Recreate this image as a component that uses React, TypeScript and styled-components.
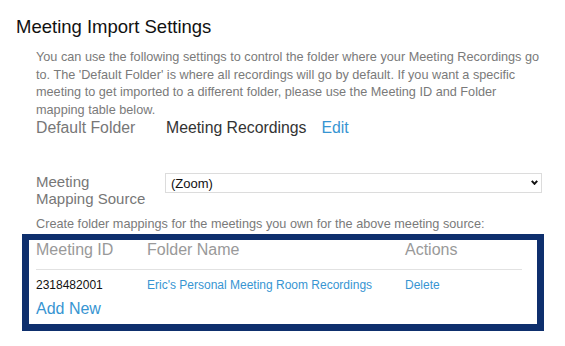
import React from "react";
import styled, { createGlobalStyle } from "styled-components";

const Global = createGlobalStyle`
  html, body { margin: 0; padding: 0; background: #fff; }
  body { font-family: "Liberation Sans", Arial, Helvetica, sans-serif; }
  * { box-sizing: border-box; }
`;

const Page = styled.div`
  width: 565px;
  height: 346px;
  padding: 16px 0 0 16px;
  overflow: hidden;
`;

const Title = styled.h2`
  margin: 0;
  font-size: 18.5px;
  font-weight: 400;
  color: #111;
  line-height: 22px;
`;

const Content = styled.div`
  padding: 0 0 0 20px;
  width: 529px;
`;

const Intro = styled.p`
  margin: 11px 0 0;
  font-size: 12.7px;
  line-height: 17.5px;
  color: #7a7a7a;
  width: 509px;
`;

const DefaultRow = styled.div`
  display: flex;
  align-items: baseline;
  font-size: 15.8px;
  line-height: 18px;
`;

const FieldLabel = styled.div`
  width: 130px;
  flex: none;
  color: #777;
`;

const Value = styled.span`
  color: #333;
  margin-right: 15px;
`;

const Link = styled.a<{ $size?: number }>`
  color: #3795d2;
  text-decoration: none;
  font-size: ${(p) => p.$size ?? 15.8}px;
  cursor: pointer;
`;

const MappingRow = styled.div`
  display: flex;
  align-items: flex-start;
  margin-top: 36px;
`;

const MappingLabel = styled.div`
  width: 129px;
  flex: none;
  color: #777;
  font-size: 15px;
  line-height: 17px;
`;

const SelectWrap = styled.div`
  position: relative;
  width: 377px;
  height: 20px;
`;

const Select = styled.select`
  appearance: none;
  -webkit-appearance: none;
  width: 100%;
  height: 100%;
  border: 1px solid #dcdcdc;
  border-radius: 0;
  background: #fff;
  font-family: "Liberation Sans", Arial, sans-serif;
  font-size: 13px;
  color: #111;
  padding: 0 0 0 5px;
  outline: none;
`;

const Chevron = styled.svg`
  position: absolute;
  right: 4px;
  top: 7px;
  pointer-events: none;
`;

const Hint = styled.div`
  margin-top: 8px;
  font-size: 12.7px;
  line-height: 18px;
  color: #7a7a7a;
`;

const Box = styled.div`
  margin: 1px 0 0 -14px;
  width: 522px;
  border: 7px solid #0e2f6d;
  border-top-width: 6px;
  padding: 0 15px 5px 7px;
`;

const Grid = styled.div`
  display: grid;
  grid-template-columns: 111px 258px 1fr;
`;

const HeadCell = styled.div`
  font-size: 16px;
  line-height: 20px;
  color: #999;
  padding-bottom: 9px;
  border-bottom: 1px solid #e2e2e2;
`;

const Cell = styled.div`
  font-size: 12px;
  line-height: 16px;
  color: #111;
  padding-top: 7px;
`;

const AddRow = styled.div`
  margin-top: 6px;
  line-height: 20px;
`;

export default function App() {
  return (
    <>
      <Global />
      <Page>
        <Title>Meeting Import Settings</Title>
        <Content>
          <Intro>
            You can use the following settings to control the folder where your Meeting Recordings go
            to. The 'Default Folder' is where all recordings will go by default. If you want a specific
            meeting to get imported to a different folder, please use the Meeting ID and Folder
            mapping table below.
          </Intro>
          <DefaultRow>
            <FieldLabel>Default Folder</FieldLabel>
            <Value>Meeting Recordings</Value>
            <Link>Edit</Link>
          </DefaultRow>
          <MappingRow>
            <MappingLabel>
              Meeting
              <br />
              Mapping Source
            </MappingLabel>
            <SelectWrap>
              <Select defaultValue="zoom">
                <option value="zoom">(Zoom)</option>
              </Select>
              <Chevron width="7" height="5" viewBox="0 0 7 5">
                <path d="M0.8 0.8 L3.5 3.8 L6.2 0.8" fill="none" stroke="#111" strokeWidth="2" />
              </Chevron>
            </SelectWrap>
          </MappingRow>
          <Hint>Create folder mappings for the meetings you own for the above meeting source:</Hint>
          <Box>
            <Grid>
              <HeadCell>Meeting ID</HeadCell>
              <HeadCell>Folder Name</HeadCell>
              <HeadCell>Actions</HeadCell>
              <Cell>2318482001</Cell>
              <Cell>
                <Link $size={12}>Eric's Personal Meeting Room Recordings</Link>
              </Cell>
              <Cell>
                <Link $size={12}>Delete</Link>
              </Cell>
            </Grid>
            <AddRow>
              <Link $size={16}>Add New</Link>
            </AddRow>
          </Box>
        </Content>
      </Page>
    </>
  );
}
